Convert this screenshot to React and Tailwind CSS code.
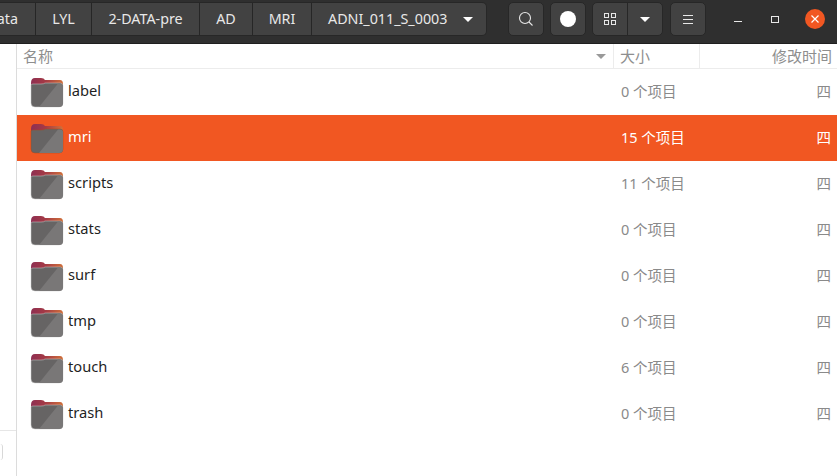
import { useId } from 'react'

const FILES = [
  { name: 'label', size: '0 个项目' },
  { name: 'mri', size: '15 个项目', selected: true },
  { name: 'scripts', size: '11 个项目' },
  { name: 'stats', size: '0 个项目' },
  { name: 'surf', size: '0 个项目' },
  { name: 'tmp', size: '0 个项目' },
  { name: 'touch', size: '6 个项目' },
  { name: 'trash', size: '0 个项目' },
]

const font = { fontFamily: '"Noto Sans", "Noto Sans CJK SC", sans-serif' }

function Folder({ selected }) {
  const id = useId()
  return (
    <svg width="34" height="31" viewBox="0 0 34 31" className="shrink-0">
      <defs>
        <linearGradient id={id} x1="0" x2="1" y1="0" y2="0">
          <stop offset="0" stopColor="#8e2f52" />
          <stop offset="0.45" stopColor="#a53a45" />
          <stop offset="1" stopColor="#d0703a" />
        </linearGradient>
      </defs>
      <path d="M1 6 Q1 1 5 1 H11 Q14 1 15 3 H30 Q33 3 33 7 V14 H1 Z" fill={`url(#${id})`} />
      <path
        d="M1 8 Q1 7 3 7 H11 Q14 7 15 6 H30 Q33 6 33 9 V26 Q33 30 29 30 H5 Q1 30 1 26 Z"
        fill="#666464"
        stroke={selected ? '#a8481f' : '#cfcfcf'}
        strokeWidth="0.5"
      />
      <path d="M9 30 L28 6.5 H30 Q33 6.5 33 9 V26 Q33 30 29 30 Z" fill="#797777" />
    </svg>
  )
}

function Caret({ className }) {
  return <div className={`w-0 h-0 border-x-[5px] border-x-transparent border-t-[5px] ${className}`} />
}

function PathButton({ children, className = '' }) {
  return <div className={`h-full flex items-center justify-center border-r border-[#262626] ${className}`}>{children}</div>
}

function ToolButton({ children, className = '' }) {
  return (
    <div className={`h-[34px] flex items-center justify-center bg-[#424242] border border-[#272727] rounded-[5px] ${className}`}>
      {children}
    </div>
  )
}

export default function App() {
  return (
    <div className="w-[837px] h-[476px] overflow-hidden bg-white flex flex-col" style={font}>
      <header className="h-[44px] shrink-0 bg-[#2f2f2f] border-b border-[#1f1f1f] flex items-center text-[14.3px] text-[#e8e8e8]">
        <div className="h-[34px] w-[487px] -mt-[5px] flex bg-[#424242] border-y border-r border-[#272727] rounded-r-[5px] overflow-hidden shrink-0">
          <PathButton className="w-[36px] justify-end pr-[17px]">ata</PathButton>
          <PathButton className="w-[56px]">LYL</PathButton>
          <PathButton className="w-[108px]">2-DATA-pre</PathButton>
          <PathButton className="w-[53px]">AD</PathButton>
          <PathButton className="w-[59px]">MRI</PathButton>
          <div className="flex-1 flex items-center pl-[16px] gap-[16px]">
            ADNI_011_S_0003
            <Caret className="border-t-white" />
          </div>
        </div>
        <ToolButton className="w-[36px] ml-[21px] -mt-[5px]">
          <svg width="16" height="16" viewBox="0 0 16 16" fill="none" stroke="#e8e8e8" strokeWidth="1.1">
            <circle cx="7" cy="7" r="5.5" />
            <path d="M11 11 L14.5 14.5" />
          </svg>
        </ToolButton>
        <ToolButton className="w-[36px] ml-[6px] -mt-[5px]">
          <div className="w-[16px] h-[16px] rounded-full bg-white" />
        </ToolButton>
        <ToolButton className="w-[71px] ml-[6px] -mt-[5px]">
          <div className="w-[35px] h-full flex items-center justify-center border-r border-[#272727]">
            <svg width="12" height="12" viewBox="0 0 12 12" fill="none" stroke="#e8e8e8" strokeWidth="1">
              <rect x="0.5" y="0.5" width="4" height="4" />
              <rect x="7.5" y="0.5" width="4" height="4" />
              <rect x="0.5" y="7.5" width="4" height="4" />
              <rect x="7.5" y="7.5" width="4" height="4" />
            </svg>
          </div>
          <div className="flex-1 flex items-center justify-center">
            <Caret className="border-t-white" />
          </div>
        </ToolButton>
        <ToolButton className="w-[36px] ml-[7px] -mt-[5px]">
          <div className="w-[10px] flex flex-col gap-[3px]">
            <div className="h-px bg-[#e8e8e8]" />
            <div className="h-px bg-[#e8e8e8]" />
            <div className="h-px bg-[#e8e8e8]" />
          </div>
        </ToolButton>
        <div className="flex-1 flex items-center justify-between pl-[28px] pr-[12px] -mt-[5px]">
          <div className="w-[8px] h-px bg-[#e8e8e8] mt-[4px]" />
          <div className="w-[8px] h-[7px] border border-[#e8e8e8] ml-[24px]" />
          <div className="w-[20px] h-[20px] rounded-full bg-[#f15722] flex items-center justify-center ml-[22px]">
            <svg width="8" height="8" viewBox="0 0 8 8" stroke="white" strokeWidth="1.2">
              <path d="M0.5 0.5 L7.5 7.5 M7.5 0.5 L0.5 7.5" />
            </svg>
          </div>
        </div>
      </header>

      <div className="flex-1 flex min-h-0">
        <aside className="w-[17px] shrink-0 border-r border-[#dcdcdc] flex flex-col">
          <div className="h-[387px] border-b border-[#e6e6e6]" />
          <div className="mt-[13px] w-[3px] h-[16px] border-r border-[#d8d8d8] rounded-r-full" />
        </aside>
        <main className="flex-1 flex flex-col min-w-0">
          <div className="h-[25px] shrink-0 flex text-[15px] text-[#8e8e8e] border-b border-[#ececec]">
            <div className="w-[597px] flex items-center justify-between pl-[6px] pr-[7px] border-r border-[#ececec]">
              <span>名称</span>
              <Caret className="border-t-[#999999]" />
            </div>
            <div className="w-[86px] flex items-center pl-[6px] border-r border-[#ececec]">大小</div>
            <div className="flex-1 flex items-center justify-end pr-[5px]">修改时间</div>
          </div>
          {FILES.map((file) => (
            <div
              key={file.name}
              className={`h-[46px] shrink-0 flex items-center text-[14.5px] ${file.selected ? 'bg-[#f15722] text-white' : 'text-[#1f1f1f]'}`}
            >
              <div className="w-[597px] flex items-center pl-[13px] gap-[4px]">
                <Folder selected={file.selected} />
                <span className="text-[14.7px] -mt-[3px]">{file.name}</span>
              </div>
              <div className={`w-[199px] pl-[7px] ${file.selected ? '' : 'text-[#8a8a8a]'}`}>{file.size}</div>
              <div className={`flex-1 text-right pr-[6px] ${file.selected ? '' : 'text-[#8a8a8a]'}`}>四</div>
            </div>
          ))}
        </main>
      </div>
    </div>
  )
}
